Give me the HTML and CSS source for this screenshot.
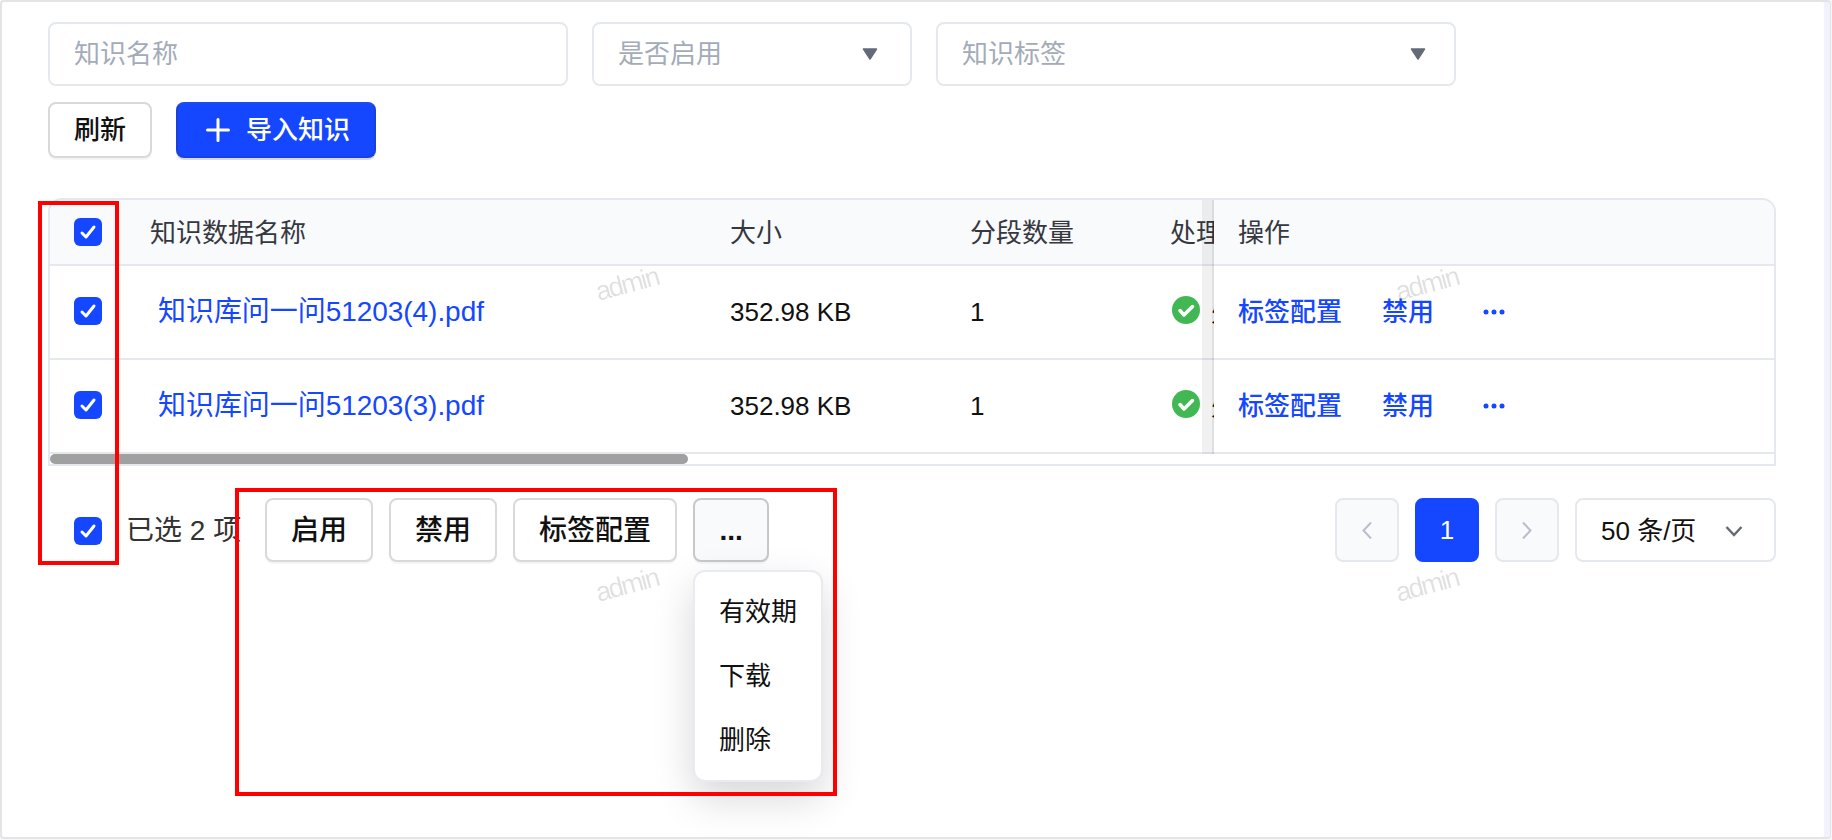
FILE: index.html
```html
<!DOCTYPE html>
<html lang="zh-CN">
<head>
    <meta charset="UTF-8">
    <meta name="viewport" content="width=device-width, initial-scale=1.0">
    <title>知识数据</title>
    <link rel="stylesheet" href="styles.css">
</head>
<body>
    <svg width="0" height="0" class="symbols">
        <symbol id="check" viewBox="0 0 28 28">
            <path d="M8 15l4 4 8-10" fill="none" stroke="#fff" stroke-width="3" stroke-linecap="round" stroke-linejoin="round"/>
        </symbol>
        <symbol id="success" viewBox="0 0 28 28">
            <circle cx="14" cy="14" r="14" fill="#42b854"/>
            <path d="M8 14.500l4 4.500 8.500-8.500" fill="none" stroke="#fff" stroke-width="3.500" stroke-linecap="round" stroke-linejoin="round"/>
        </symbol>
        <symbol id="caret" viewBox="0 0 16 12">
            <path d="M1.500 1h13L8 11z" fill="#646a7a" stroke="#646a7a" stroke-width="1.500" stroke-linejoin="round"/>
        </symbol>
        <symbol id="dots" viewBox="0 0 22 6">
            <circle cx="3" cy="3" r="2.500"/><circle cx="11" cy="3" r="2.500"/><circle cx="19" cy="3" r="2.500"/>
        </symbol>
    </svg>

    <div class="page">
        <div class="filters">
            <div class="field wide">知识名称</div>
            <div class="field">是否启用<svg class="caret"><use href="#caret"/></svg></div>
            <div class="field wide">知识标签<svg class="caret"><use href="#caret"/></svg></div>
        </div>
        <div class="actions">
            <button class="button">刷新</button>
            <button class="button primary">
                <svg width="26" height="26" viewBox="0 0 26 26"><path d="M13 2.500v21M2.500 13h21" stroke="#fff" stroke-width="3" stroke-linecap="round"/></svg>
                <span>导入知识</span>
            </button>
        </div>

        <div class="table">
            <div class="main-cols">
                <div class="row head">
                    <span class="checkbox"><svg><use href="#check"/></svg></span>
                    <span>知识数据名称</span><span>大小</span><span>分段数量</span><span>处理状态</span>
                </div>
                <div class="row">
                    <span class="checkbox"><svg><use href="#check"/></svg></span>
                    <a class="name">知识库问一问51203(4).pdf</a><span>352.98 KB</span><span>1</span>
                    <span class="status"><svg><use href="#success"/></svg>处理成功</span>
                </div>
                <div class="row">
                    <span class="checkbox"><svg><use href="#check"/></svg></span>
                    <a class="name">知识库问一问51203(3).pdf</a><span>352.98 KB</span><span>1</span>
                    <span class="status"><svg><use href="#success"/></svg>处理成功</span>
                </div>
            </div>
            <div class="fixed-col">
                <div class="row head">操作</div>
                <div class="row ops"><a>标签配置</a><a>禁用</a><svg class="dots"><use href="#dots"/></svg></div>
                <div class="row ops"><a>标签配置</a><a>禁用</a><svg class="dots"><use href="#dots"/></svg></div>
            </div>
            <div class="scrollbar"><div class="thumb"></div></div>
        </div>

        <div class="footer">
            <span class="checkbox"><svg><use href="#check"/></svg></span>
            <span class="selected">已选 2 项</span>
            <div class="bulk">
                <button class="button">启用</button>
                <button class="button">禁用</button>
                <button class="button">标签配置</button>
                <div class="more">
                    <button class="button active">...</button>
                    <div class="menu">
                        <div>有效期</div>
                        <div>下载</div>
                        <div>删除</div>
                    </div>
                </div>
            </div>
            <div class="pager">
                <span class="page-btn"><svg width="20" height="24" viewBox="0 0 20 24"><path d="M14 4.500L6.500 12.500l7.500 8"/></svg></span>
                <span class="page-btn current">1</span>
                <span class="page-btn"><svg width="20" height="24" viewBox="0 0 20 24"><path d="M6 4.500l7.500 8L6 20.500"/></svg></span>
                <span class="page-size">50 条/页<svg width="20" height="14" viewBox="0 0 20 14"><path d="M2.500 3l7.500 8 7.500-8"/></svg></span>
            </div>
        </div>
    </div>

    <div class="watermark left top">admin</div>
    <div class="watermark right top">admin</div>
    <div class="watermark left bottom">admin</div>
    <div class="watermark right bottom">admin</div>
    <div class="mark mark-checks"></div>
    <div class="mark mark-bulk"></div>
</body>
</html>
```

FILE: styles.css
```css
* {
    box-sizing: border-box;
}
body {
    margin: 0;
    height: 840px;
    position: relative;
    overflow: hidden;
    background-color: #f7f7f8;
    color: #111;
    font-family: "Liberation Sans", "Noto Sans CJK SC", sans-serif;
    font-size: 26px;
    line-height: 40px;
}
.symbols {
    position: absolute;
}
.page {
    width: 1831px;
    height: 839px;
    padding: 20px 48px 0 46px;
    border: 2px solid #e4e4e6;
    border-right-width: 1px;
    border-radius: 4px;
    background-color: #fff;
    box-shadow: inset -6px 0 0 #f0f3fb;
}
.filters {
    display: flex;
    gap: 24px;
}
.field {
    display: flex;
    align-items: center;
    justify-content: space-between;
    width: 320px;
    height: 64px;
    padding: 0 32px 0 24px;
    border: 2px solid #e5e8ed;
    border-radius: 8px;
    color: #a4abb8;
}
.wide {
    width: 520px;
    padding-right: 28px;
}
.caret {
    width: 16px;
    height: 12px;
}
.actions {
    display: flex;
    gap: 24px;
    margin-top: 16px;
}
.button {
    height: 56px;
    padding: 0 24px;
    border: 2px solid #d9d9d9;
    border-radius: 8px;
    background-color: #fff;
    box-shadow: 0 2px 0 rgba(0, 0, 0, 0.04);
    color: #111;
    font: 500 26px/40px "Liberation Sans", "Noto Sans CJK SC", sans-serif;
}
.primary {
    display: flex;
    align-items: center;
    gap: 15px;
    width: 200px;
    padding-left: 27px;
    border-color: #1840dc;
    border-top-color: #1a4cf5;
    background-color: #1447ff;
    box-shadow: 0 2px 0 rgba(0, 0, 0, 0.15);
    color: #fff;
}
.primary svg {
    flex: none;
}
.table {
    display: grid;
    grid-template-columns: 1164px 1fr;
    grid-template-rows: 254px 10px;
    width: 1728px;
    height: 268px;
    margin-top: 40px;
    border: 2px solid #e5e8ed;
    border-radius: 14px 14px 0 0;
    overflow: hidden;
}
.main-cols {
    position: relative;
    overflow: hidden;
}
/* edge shadow next to the fixed column */
.main-cols::after {
    content: "";
    position: absolute;
    inset: 0 0 0 auto;
    width: 10px;
    background-color: rgba(0, 0, 0, 0.055);
    border-right: 2px solid rgba(0, 0, 0, 0.07);
}
.row {
    display: grid;
    grid-template-columns: 100px 580px 240px 200px 200px;
    align-items: center;
    height: 94px;
    border-bottom: 2px solid #e5e8ed;
    white-space: nowrap;
}
.head {
    height: 66px;
    background-color: #f9fafc;
    color: #353840;
}
.head span:not(.checkbox),
.fixed-col .head {
    padding-top: 2px;
}
.checkbox {
    width: 28px;
    height: 28px;
    margin-left: 24px;
    border-radius: 6px;
    background-color: #1447ff;
}
.row .checkbox {
    margin-bottom: 2px;
}
.head .checkbox {
    margin-bottom: 0;
}
.checkbox svg,
.status svg {
    display: block;
    width: 28px;
    height: 28px;
}
.name {
    padding-left: 8px;
    color: #1447ff;
    font-size: 28px;
    letter-spacing: -0.05px;
}
.status {
    display: flex;
    align-items: center;
    gap: 11px;
    padding-left: 2px;
}
.status svg {
    flex: none;
    margin-top: -5px;
}
.fixed-col .row {
    display: flex;
    padding-left: 24px;
}
.ops {
    color: #1447ff;
    font-weight: 500;
}
.ops a {
    margin-right: 40px;
}
.dots {
    width: 22px;
    height: 6px;
    margin-left: 9px;
    fill: #1447ff;
}
.scrollbar {
    grid-column: 1 / 3;
    height: 10px;
}
.thumb {
    width: 638px;
    height: 10px;
    border-radius: 5px;
    background-color: #a0a0a0;
}
.footer {
    display: flex;
    align-items: center;
    width: 1728px;
    height: 64px;
    margin-top: 32px;
}
.footer .checkbox {
    margin-top: 2px;
    margin-left: 26px;
}
.selected {
    width: 139px;
    margin-left: 24px;
    padding-top: 2px;
    color: #333;
    font-size: 28px;
}
.bulk {
    display: flex;
    gap: 16px;
}
.bulk .button {
    height: 64px;
    padding-top: 2px;
    font-size: 28px;
}
.more {
    position: relative;
}
.bulk .active {
    width: 76px;
    border-color: #c6c8cb;
    background-color: #f9fafc;
    font-weight: bold;
}
.menu {
    position: absolute;
    top: 72px;
    left: 0;
    width: 130px;
    padding: 8px 0;
    border: 2px solid #e8ebf0;
    border-radius: 12px;
    background-color: #fff;
    box-shadow: 0 16px 40px rgba(0, 0, 0, 0.16);
}
.menu div {
    padding: 12px 24px;
}
.pager {
    display: flex;
    gap: 16px;
    margin-left: auto;
}
.page-btn,
.page-size {
    display: flex;
    align-items: center;
    justify-content: center;
    width: 64px;
    height: 64px;
    border: 2px solid #e5e8ed;
    border-radius: 8px;
    background-color: #f9fafc;
}
.pager path {
    fill: none;
    stroke: #b9bec9;
    stroke-width: 2;
}
.current {
    border-color: #1447ff;
    background-color: #1447ff;
    color: #fff;
}
.page-size {
    justify-content: space-between;
    width: 201px;
    padding: 2px 30px 0 24px;
    background-color: #fff;
}
.pager .page-size path {
    stroke: #646a7a;
    stroke-width: 2.5;
}
.watermark {
    position: absolute;
    color: rgba(0, 0, 0, 0.13);
    font-size: 27px;
    line-height: 30px;
    letter-spacing: -2px;
    transform: rotate(-15deg);
}
.left { left: 595px; }
.right { left: 1395px; }
.top { top: 269px; }
.bottom { top: 570px; }
.mark {
    position: absolute;
    border: 4px solid #f00;
}
.mark-checks {
    top: 201px;
    left: 38px;
    width: 81px;
    height: 364px;
}
.mark-bulk {
    top: 488px;
    left: 235px;
    width: 602px;
    height: 308px;
}
```
